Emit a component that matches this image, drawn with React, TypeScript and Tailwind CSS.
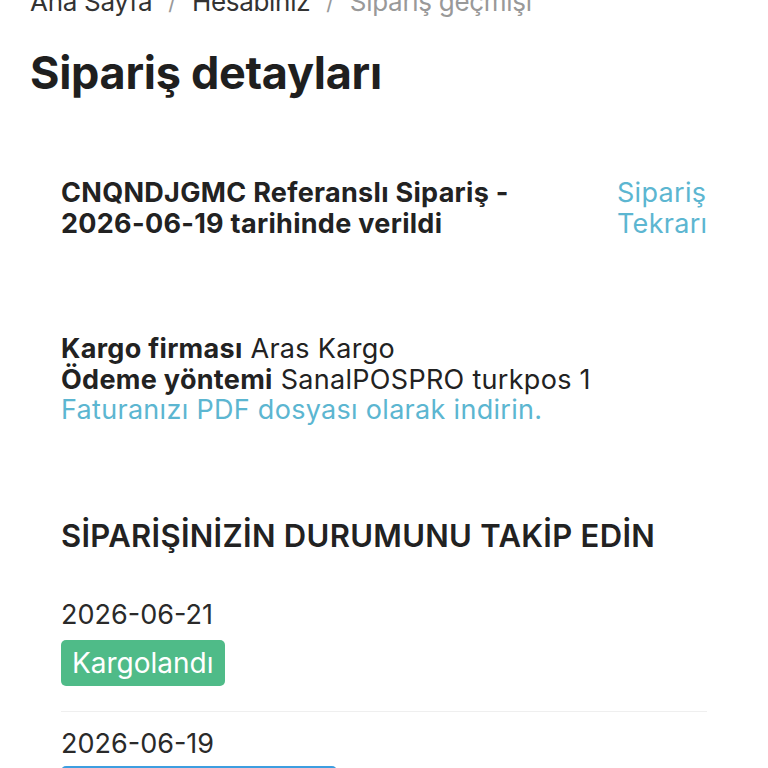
import React from "react";

const font = { fontFamily: "Inter, 'Noto Sans', sans-serif" };

function StatusRow({ date, label, color, last }: { date: string; label: string; color: string; last?: boolean }) {
  return (
    <div className={last ? "pt-[16px]" : "pb-[25px] border-b border-[#efefef]"}>
      <div className="text-[27px] leading-[32px] text-[#2a2a2a]">{date}</div>
      <span className={`${last ? "mt-[6px]" : "mt-[9px]"} inline-block rounded-[5px] px-[11px] h-[46px] leading-[46px] text-[28px] text-white ${color}`}>{label}</span>
    </div>
  );
}

export default function App() {
  return (
    <div className="h-[768px] bg-white text-[#222] overflow-hidden" style={font}>
      <div className="px-[30px]">
        <nav className="-mt-[14px] flex items-center gap-[16px] text-[26px] leading-[32px] text-[#333] tracking-[-0.3px]">
          <span>Ana Sayfa</span>
          <span className="text-[#999] text-[22px]">/</span>
          <span>Hesabınız</span>
          <span className="text-[#999] text-[22px]">/</span>
          <span className="text-[#999]">Sipariş geçmişi</span>
        </nav>
        <h1 className="mt-[29px] text-[45px] leading-[52px] font-bold tracking-[-0.3px] text-[#1f1f1f]">Sipariş detayları</h1>

        <section className="mt-[78px] px-[31px] flex justify-between items-start">
          <h3 className="text-[27px] leading-[31px] font-bold tracking-[0.3px] text-[#222]">
            CNQNDJGMC Referanslı Sipariş -<br />2026-06-19 tarihinde verildi
          </h3>
          <a className="text-[27px] leading-[31px] text-[#5cb6d1] tracking-[0.3px] w-[92px] -mr-[2px]">Sipariş Tekrarı</a>
        </section>

        <section className="mt-[95px] px-[31px] text-[27px] leading-[30.5px] tracking-[0.3px]">
          <div><b className="font-bold">Kargo firması</b> Aras Kargo</div>
          <div><b className="font-bold">Ödeme yöntemi</b> SanalPOSPRO turkpos 1</div>
          <a className="text-[#5cb6d1]">Faturanızı PDF dosyası olarak indirin.</a>
        </section>

        <section className="mt-[90px] px-[31px]">
          <h3 className="text-[31px] leading-[40px] font-semibold tracking-[0.3px] text-[#222]">SİPARİŞİNİZİN DURUMUNU TAKİP EDİN</h3>
          <div className="mt-[43px]">
            <StatusRow date="2026-06-21" label="Kargolandı" color="bg-[#4fbb88]" />
            <StatusRow date="2026-06-19" label="Ödeme kabul edildi" color="bg-[#3d9ee0]" last />
          </div>
        </section>
      </div>
    </div>
  );
}
